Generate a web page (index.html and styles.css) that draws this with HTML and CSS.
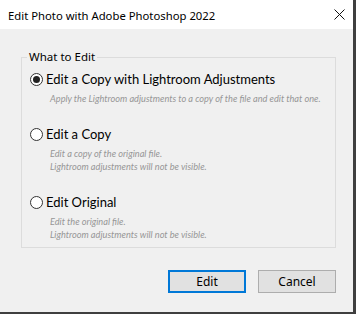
FILE: index.html
```html
<!DOCTYPE html>
<html lang="en">

<head>
    <meta charset="utf-8">
    <title>Edit Photo with Adobe Photoshop 2022</title>
    <link rel="stylesheet" href="styles.css">
</head>

<body>

    <div class="window">
        <header class="titlebar">
            <span class="title">Edit Photo with Adobe Photoshop 2022</span>
            <svg class="close" width="11" height="11" viewBox="0 0 11 11">
                <path d="M0.5 0.5 L10.5 10.5 M10.5 0.5 L0.5 10.5" stroke="#111" stroke-width="1" fill="none" />
            </svg>
        </header>

        <main class="content">
            <fieldset class="group">
                <legend>What to Edit</legend>

                <div class="option">
                    <div class="radiorow">
                        <span class="radio checked"></span>
                        <span class="label">Edit a Copy with Lightroom Adjustments</span>
                    </div>
                    <p class="desc">Apply the Lightroom adjustments to a copy of the file and edit that one.</p>
                </div>

                <div class="option">
                    <div class="radiorow">
                        <span class="radio"></span>
                        <span class="label">Edit a Copy</span>
                    </div>
                    <p class="desc">Edit a copy of the original file.<br>Lightroom adjustments will not be visible.</p>
                </div>

                <div class="option">
                    <div class="radiorow">
                        <span class="radio"></span>
                        <span class="label">Edit Original</span>
                    </div>
                    <p class="desc">Edit the original file.<br>Lightroom adjustments will not be visible.</p>
                </div>
            </fieldset>

            <div class="buttons">
                <button class="btn default">Edit</button>
                <button class="btn">Cancel</button>
            </div>
        </main>
    </div>

</body>

</html>
```

FILE: styles.css
```css
* {
    box-sizing: border-box;
}

body {
    margin: 0;
    width: 356px;
    height: 314px;
    background-color: #3f3f3f;
    font-family: 'Noto Sans', 'Open Sans', sans-serif;
    color: #000;
    overflow: hidden;
}

.window {
    width: 353px;
    height: 312px;
    background-color: #f0f0f0;
}

.titlebar {
    height: 29px;
    background-color: #fff;
    display: flex;
    align-items: center;
    justify-content: space-between;
    padding: 0 8px 0 8px;
}

.title {
    font-size: 11.3px;
    margin-top: 1px;
}

.content {
    padding: 20px 17px 0 21px;
}

.group {
    margin: 0;
    border: 1px solid #dcdcdc;
    padding: 4px 8px 6px 8px;
    height: 199px;
}

.group legend {
    font-size: 11.5px;
    line-height: 16px;
    padding: 0 2px;
    margin-left: -3px;
}

.option + .option {
    margin-top: 19px;
}

.radiorow {
    display: flex;
    align-items: center;
    height: 20px;
}

.radio {
    width: 13px;
    height: 13px;
    border: 1px solid #333;
    border-radius: 50%;
    background-color: #fff;
    display: flex;
    align-items: center;
    justify-content: center;
    margin-right: 3px;
}

.radio.checked::after {
    content: "";
    width: 7px;
    height: 7px;
    border-radius: 50%;
    background-color: #222;
}

.label {
    font-family: 'Lato', sans-serif;
    font-size: 13px;
}

.desc {
    margin: 3px 0 0 20px;
    font-family: 'Lato', sans-serif;
    font-style: italic;
    font-size: 9.2px;
    line-height: 13px;
    color: #969696;
    white-space: nowrap;
}

.buttons {
    display: flex;
    justify-content: flex-end;
    gap: 12px;
    margin-top: 22px;
}

.btn {
    width: 78px;
    height: 23px;
    font-family: 'Noto Sans', 'Open Sans', sans-serif;
    font-size: 12px;
    color: #000;
    background-color: #e1e1e1;
    border: 1px solid #adadad;
    padding: 0;
}

.btn.default {
    border: 2px solid #0078d7;
}
```
